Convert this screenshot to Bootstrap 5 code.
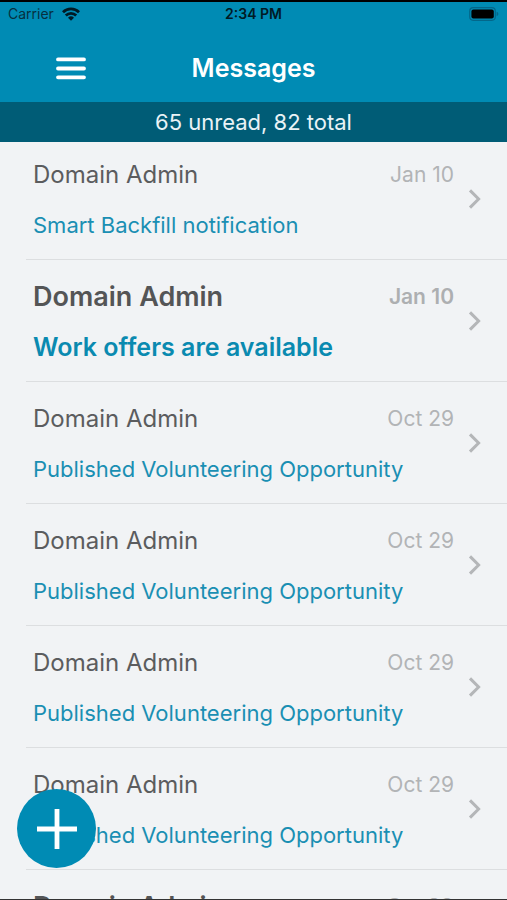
<!DOCTYPE html>
<html lang="en">
<head>
<meta charset="utf-8">
<meta name="viewport" content="width=device-width, initial-scale=1">
<title>Messages</title>
<link href="https://cdn.jsdelivr.net/npm/bootstrap@5.3.0/dist/css/bootstrap.min.css" rel="stylesheet">
<style>
  body { font-family: Inter, "Liberation Sans", sans-serif; background: #f1f3f5; }
  .app-top { background: #008bb4; border-top: 2px solid #000; }
  .status-bar { height: 24px; padding: 0 8px; font-size: 14px; line-height: 24px; color: #07303f; }
  .status-time { font-weight: 600; color: #001a24; }
  .title-bar { height: 76px; padding: 8px 52px 0; }
  .title-bar h1 { font-size: 25px; line-height: 32px; font-weight: 600; }
  .side-slot { width: 38px; }
  .count-bar { background: #005c76; color: #e9f3f6; font-size: 22px; line-height: 40px; }
  .inbox { margin-left: 26px; }
  .message { height: 122px; padding: 20px 26px 0 7px; border-bottom: 1px solid #dcdee0; color: #5b5c5e; }
  .message:first-child { height: 118px; padding-top: 16px; }
  .sender { font-size: 24px; line-height: 34px; }
  .subject { font-size: 22px; line-height: 32px; margin-top: 17px; color: #1a8fb3; }
  .date { font-size: 21px; line-height: 34px; color: #b2b4b6; }
  .unread { color: #545556; }
  .unread .sender { font-size: 27px; font-weight: 600; }
  .unread .subject { font-size: 25px; font-weight: 600; color: #0a8ab0; }
  .unread .date { font-weight: 600; color: #adafb1; }
  .chevron { margin: 31px 0 0 14px; }
  .compose { left: 17px; bottom: 32px; width: 79px; height: 79px; background: #008bb4; }
  .home-edge { height: 1px; background: #333; }
</style>
</head>
<body>
<div class="d-flex flex-column vh-100 overflow-hidden">
  <header class="app-top flex-shrink-0">
    <div class="status-bar d-flex align-items-center">
      <div class="d-flex align-items-center flex-fill w-100 gap-2">
        <span>Carrier</span>
        <svg width="18" height="14" viewBox="0 0 18 14" fill="none" stroke="#001a24" stroke-width="2.8" aria-label="Wi-Fi"><path d="M1 5.2a11.4 11.4 0 0 1 16 0"/><path d="M3.8 8.6a7.4 7.4 0 0 1 10.4 0"/><path d="M9 13.8 6 10.8a4.3 4.3 0 0 1 6 0z" fill="#001a24" stroke="none"/></svg>
      </div>
      <span class="status-time text-nowrap">2:34 PM</span>
      <div class="d-flex justify-content-end flex-fill w-100">
        <svg width="30" height="14" viewBox="0 0 30 14" aria-label="Battery"><rect x=".7" y=".7" width="25.6" height="12.6" rx="3.5" fill="none" stroke="#03678a" stroke-width="1.2"/><rect x="2.4" y="2.4" width="22.4" height="9.2" rx="2" fill="#000"/><path d="M27.6 4.8q1.8.6 1.8 2.2t-1.8 2.2z" fill="#03678a"/></svg>
      </div>
    </div>
    <div class="title-bar d-flex align-items-center justify-content-between">
      <button class="side-slot btn border-0 p-0 d-flex justify-content-center" type="button" aria-label="Menu">
        <svg width="30" height="23" viewBox="0 0 30 23" stroke="#fff" stroke-width="3.8" stroke-linecap="round"><path d="M2 2.4h26M2 11.5h26M2 20.3h26"/></svg>
      </button>
      <h1 class="text-white m-0">Messages</h1>
      <span class="side-slot"></span>
    </div>
    <div class="count-bar text-center">65 unread, 82 total</div>
  </header>
  <main class="flex-grow-1 overflow-hidden">
    <div class="inbox" id="inbox"></div>
  </main>
  <div class="home-edge flex-shrink-0"></div>
</div>
<button class="compose btn border-0 p-0 rounded-circle position-fixed d-flex align-items-center justify-content-center" type="button" aria-label="New message">
  <svg width="40" height="40" viewBox="0 0 40 40" stroke="#fff" stroke-width="4.8"><path d="M20 0v40M0 20h40"/></svg>
</button>
<script>
  const messages = [
    ["Smart Backfill notification", "Jan 10", false],
    ["Work offers are available", "Jan 10", true],
    ["Published Volunteering Opportunity", "Oct 29", false],
    ["Published Volunteering Opportunity", "Oct 29", false],
    ["Published Volunteering Opportunity", "Oct 29", false],
    ["Published Volunteering Opportunity", "Oct 29", false],
    ["Work offers are available", "Oct 29", true]
  ];
  document.getElementById("inbox").innerHTML = messages.map(([subject, date, unread]) => `
    <a href="#" class="message d-flex align-items-start text-decoration-none ${unread ? "unread" : ""}">
      <div class="flex-grow-1">
        <div class="d-flex justify-content-between">
          <span class="sender">Domain Admin</span>
          <span class="date">${date}</span>
        </div>
        <div class="subject text-nowrap">${subject}</div>
      </div>
      <svg class="chevron flex-shrink-0" width="13" height="20" viewBox="0 0 13 20" fill="none" stroke="#b4b6b8" stroke-width="3"><path d="M2 1.4 10.6 10 2 18.6"/></svg>
    </a>`).join("");
</script>
<script src="https://cdn.jsdelivr.net/npm/bootstrap@5.3.0/dist/js/bootstrap.bundle.min.js"></script>
</body>
</html>
